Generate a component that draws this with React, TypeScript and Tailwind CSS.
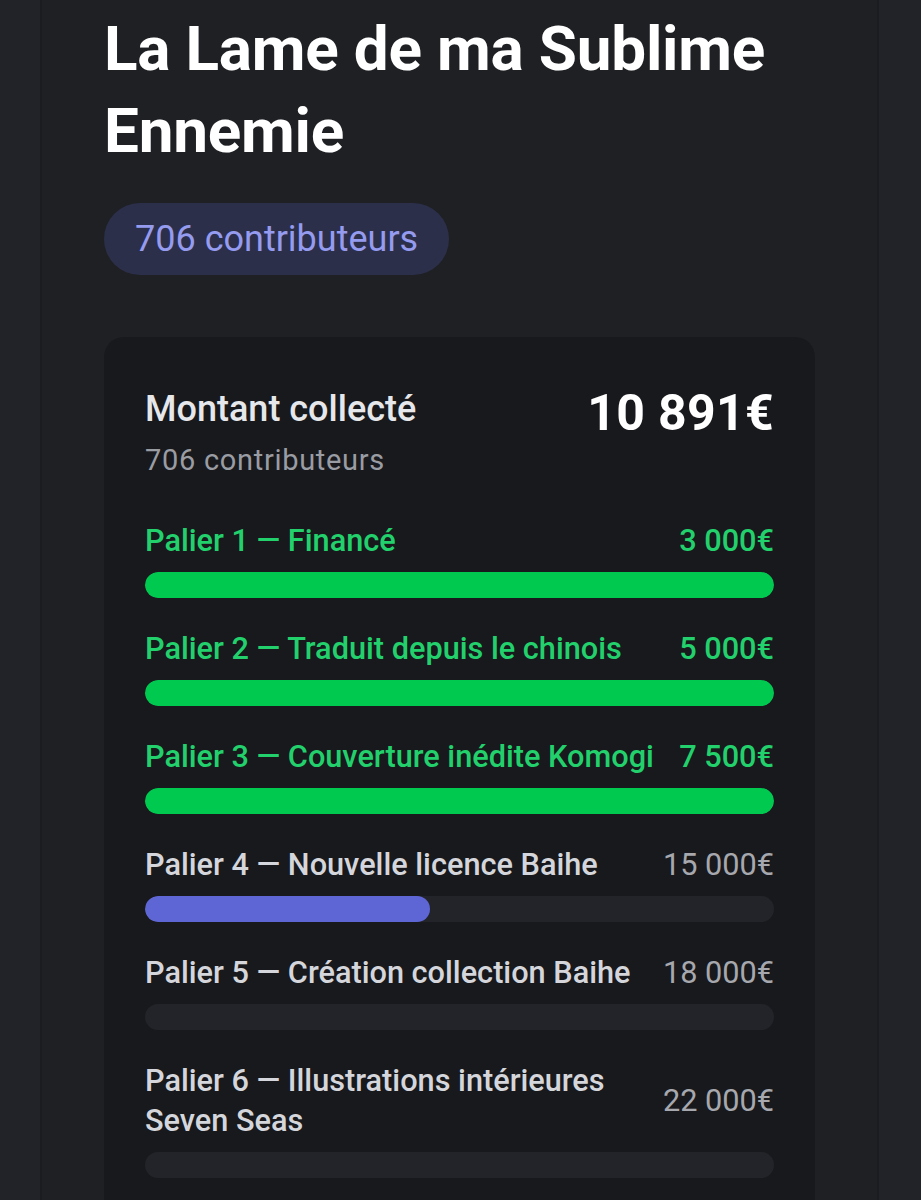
import React from "react";

type Tier = { label: string; amount: string; done: boolean; pct: number };

const tiers: Tier[] = [
  { label: "Palier 1 — Financé", amount: "3 000€", done: true, pct: 100 },
  { label: "Palier 2 — Traduit depuis le chinois", amount: "5 000€", done: true, pct: 100 },
  { label: "Palier 3 — Couverture inédite Komogi", amount: "7 500€", done: true, pct: 100 },
  { label: "Palier 4 — Nouvelle licence Baihe", amount: "15 000€", done: false, pct: 45.3 },
  { label: "Palier 5 — Création collection Baihe", amount: "18 000€", done: false, pct: 0 },
  { label: "Palier 6 — Illustrations intérieures Seven Seas", amount: "22 000€", done: false, pct: 0 },
];

export default function App() {
  return (
    <div
      className="min-h-[1200px] w-full bg-[#222328] overflow-hidden"
      style={{ fontFamily: "Roboto, 'Noto Sans', sans-serif" }}
    >
      <div className="ml-[40px] w-[839px] min-h-[1200px] bg-[#1f2024] border-x-2 border-[#1b1c20] px-[62px] pt-[8px]">
        <h1 className="text-[62px] leading-[82px] font-bold text-white tracking-[-0.2px]">
          La Lame de ma Sublime Ennemie
        </h1>
        <div className="mt-[31px] inline-flex h-[72px] items-center rounded-full bg-[#2c2f4a] px-[31px] text-[36px] text-[#959bef]">
          706 contributeurs
        </div>
        <div className="mt-[62px] rounded-[20px] bg-[#18191d] px-[41px] pt-[50px] pb-[40px]">
          <div className="flex items-start justify-between">
            <div>
              <div className="text-[36px] leading-[44px] font-medium text-[#e6e7ea]">Montant collecté</div>
              <div className="mt-[9px] text-[29px] leading-[40px] tracking-[0.7px] text-[#9a9ca3]">706 contributeurs</div>
            </div>
            <div className="text-[50px] leading-[52px] font-bold tracking-[0.3px] text-white">10 891€</div>
          </div>
          <div className="mt-[41px] flex flex-col gap-[31px]">
            {tiers.map((t) => (
              <div key={t.label}>
                <div className="flex items-center justify-between gap-[18px]">
                  <div
                    className={
                      t.done
                        ? "text-[30.7px] leading-[40px] font-medium text-[#22d06c]"
                        : "text-[30.7px] leading-[40px] font-medium text-[#d4d6db]"
                    }
                  >
                    {t.label}
                  </div>
                  <div
                    className={
                      t.done
                        ? "shrink-0 text-[30.7px] leading-[40px] font-medium text-[#22d06c]"
                        : "shrink-0 text-[30.7px] leading-[40px] text-[#a6a8ae]"
                    }
                  >
                    {t.amount}
                  </div>
                </div>
                <div className="mt-[11px] h-[26px] w-full rounded-full bg-[#232429] overflow-hidden">
                  <div
                    className={t.done ? "h-full rounded-full bg-[#00c950]" : "h-full rounded-full bg-[#5e66d5]"}
                    style={{ width: `${t.pct}%` }}
                  />
                </div>
              </div>
            ))}
          </div>
        </div>
      </div>
    </div>
  );
}
